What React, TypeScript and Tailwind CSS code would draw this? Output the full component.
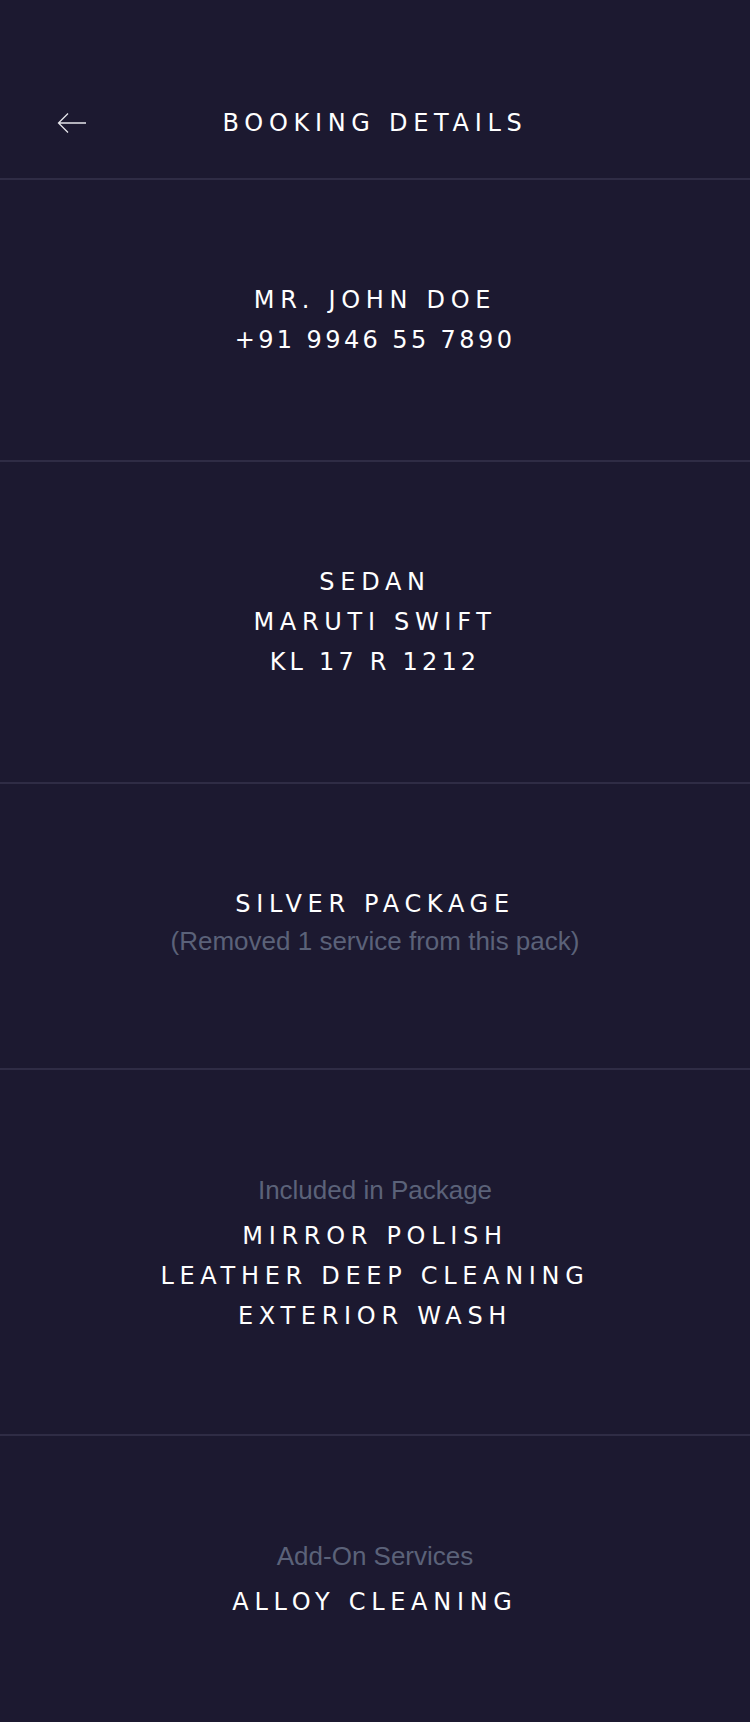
import { ReactNode } from "react";

const base = "font-['DejaVu_Sans',sans-serif] text-[24px] leading-[40px] text-white";
const heading = `${base} tracking-[5.7px]`;
const muted = "font-['Liberation_Sans',Arial,sans-serif] text-[26px] leading-[34px] text-[#5b6279]";

function Section({ height, children }: { height: string; children: ReactNode }) {
  return (
    <section
      className={`flex flex-col items-center justify-center border-b-2 border-[#2f2c45] text-center ${height}`}
    >
      {children}
    </section>
  );
}

function BackArrow() {
  return (
    <svg width="30" height="22" viewBox="0 0 30 22" fill="none" className="text-[#e5e5ea]">
      <path d="M29 11H2M11 1.5L1.5 11L11 20.5" stroke="currentColor" strokeWidth="1.3" />
    </svg>
  );
}

export default function App() {
  return (
    <div className="min-h-[1722px] w-full bg-[#1c1930]">
      <header className="flex h-[180px] items-start border-b-2 border-[#2f2c45] pt-[103px]">
        <div className="flex w-[150px] justify-start pl-[57px] pt-[9px]">
          <BackArrow />
        </div>
        <h1 className={`flex-1 pr-[150px] text-center ${heading}`}>BOOKING DETAILS</h1>
      </header>

      <Section height="h-[282px]">
        <p className={heading}>MR. JOHN DOE</p>
        <p className={`${base} tracking-[3.4px]`}>+91 9946 55 7890</p>
      </Section>

      <Section height="h-[322px]">
        <p className={heading}>SEDAN</p>
        <p className={heading}>MARUTI SWIFT</p>
        <p className={`${base} tracking-[4.2px]`}>KL 17 R 1212</p>
      </Section>

      <Section height="h-[286px]">
        <p className={heading}>SILVER PACKAGE</p>
        <p className={`${muted} mb-[10px]`}>(Removed 1 service from this pack)</p>
      </Section>

      <Section height="h-[366px]">
        <div className="flex flex-col items-center pt-[5px]">
          <p className={`${muted} mb-[9px]`}>Included in Package</p>
          <p className={heading}>MIRROR POLISH</p>
          <p className={heading}>LEATHER DEEP CLEANING</p>
          <p className={heading}>EXTERIOR WASH</p>
        </div>
      </Section>

      <section className="flex h-[286px] flex-col items-center justify-center pt-[3px] text-center">
        <p className={`${muted} mb-[9px]`}>Add-On Services</p>
        <p className={heading}>ALLOY CLEANING</p>
      </section>
    </div>
  );
}
